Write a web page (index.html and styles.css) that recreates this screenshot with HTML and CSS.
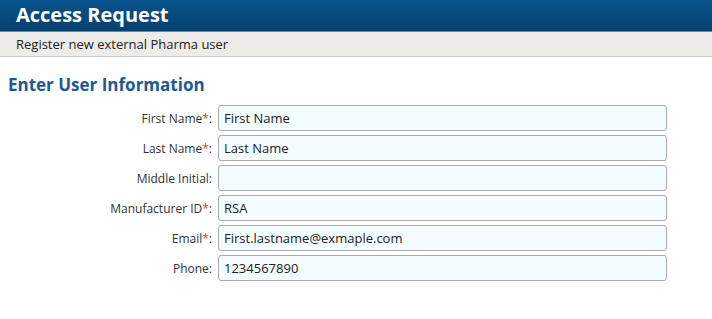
FILE: index.html
```html
<!DOCTYPE html>
<html lang="en">
<head>
    <meta charset="UTF-8">
    <meta name="viewport" content="width=device-width, initial-scale=1.0">
    <title>Access Request</title>
    <link rel="stylesheet" href="styles.css">
</head>
<body>
    <div class="header">
        <h1>Access Request</h1>
    </div>
    <div class="subbar">Register new external Pharma user</div>

    <div class="content">
        <h2>Enter User Information</h2>
        <form class="user-form">
            <label for="first">First Name<span class="req">*</span>:</label>
            <input id="first" type="text" value="First Name">

            <label for="last">Last Name<span class="req">*</span>:</label>
            <input id="last" type="text" value="Last Name">

            <label for="middle">Middle Initial:</label>
            <input id="middle" type="text" value="">

            <label for="mfr">Manufacturer ID<span class="req">*</span>:</label>
            <input id="mfr" type="text" value="RSA">

            <label for="email">Email<span class="req">*</span>:</label>
            <input id="email" type="text" value="First.lastname@exmaple.com">

            <label for="phone">Phone:</label>
            <input id="phone" type="text" value="1234567890">
        </form>
    </div>
</body>
</html>
```

FILE: styles.css
```css
* {
    margin: 0;
    padding: 0;
    box-sizing: border-box;
}

body {
    font-family: "Open Sans", "Liberation Sans", sans-serif;
    background-color: #fff;
    color: #333;
}

.header {
    height: 32px;
    background: linear-gradient(#08558f, #073f6c);
    border-bottom: 1px solid #2b9cc2;
    padding-left: 16px;
}

.header h1 {
    font-size: 20px;
    font-weight: bold;
    color: #fff;
    line-height: 29px;
}

.subbar {
    height: 25px;
    background-color: #eeece8;
    border-bottom: 1px solid #cccccc;
    padding-left: 16px;
    font-size: 13px;
    line-height: 24px;
    color: #222;
}

.content {
    padding: 16px 8px 0;
}

.content h2 {
    font-size: 17px;
    font-weight: bold;
    color: #1b5a93;
    line-height: 24px;
    margin-bottom: 8px;
}

.user-form {
    display: grid;
    grid-template-columns: 204px 449px;
    column-gap: 6px;
    row-gap: 4px;
    align-items: center;
}

.user-form label {
    text-align: right;
    font-size: 12px;
    color: #333;
}

.user-form .req {
    color: #e8402a;
}

.user-form input {
    height: 26px;
    border: 1px solid #aaaaaa;
    border-radius: 3px;
    background-color: #f3fcff;
    padding: 0 5px;
    font-family: "Open Sans", "Liberation Sans", sans-serif;
    font-size: 13px;
    color: #222;
}
```
